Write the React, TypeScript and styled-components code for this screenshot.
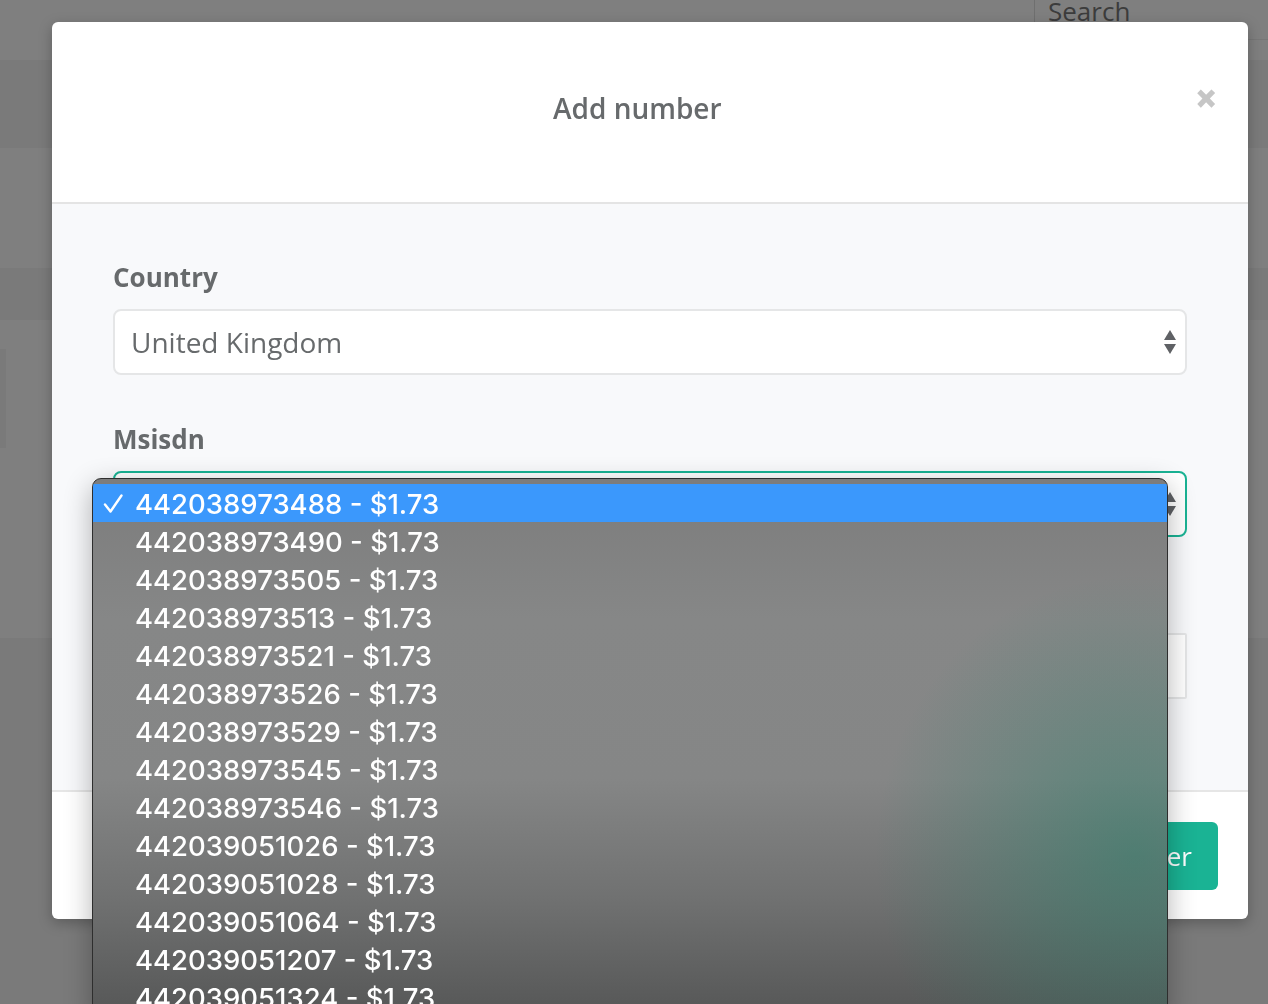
import React from "react";
import styled, { createGlobalStyle } from "styled-components";

const Global = createGlobalStyle`
  html, body { margin: 0; padding: 0; overflow: hidden; }
  body { font-family: "Open Sans", "Liberation Sans", sans-serif; background: #7a7a7a; }
  * { box-sizing: border-box; }
`;

const Page = styled.div`
  height: 1004px;
  display: flex;
  flex-direction: column;
`;

const TopBar = styled.div`
  height: 60px;
  background: #7f7f7f;
  display: flex;
  justify-content: flex-end;
`;

const SearchBox = styled.div`
  width: 234px;
  height: 40px;
  border-left: 1px solid #6f6f6f;
  border-bottom: 1px solid #777;
  padding: 0 0 0 13px;
  font-size: 26px;
  line-height: 22px;
  color: #3c3c3c;
  overflow: hidden;
`;

const Band = styled.div<{ $dark?: boolean; $h?: number }>`
  background: ${(p) => (p.$dark ? "#7a7a7a" : "#7f7f7f")};
  height: ${(p) => (p.$h ? `${p.$h}px` : "auto")};
  flex: ${(p) => (p.$h ? "none" : "1")};
  display: flex;
  flex-direction: column;
`;

const SideTab = styled.div`
  width: 6px;
  height: 99px;
  margin-top: 29px;
  background: #7a7a7a;
`;

const Modal = styled.div`
  position: fixed;
  top: 22px;
  left: 52px;
  width: 1196px;
  background: #fff;
  border-radius: 6px;
  box-shadow: 0 4px 14px rgba(0, 0, 0, 0.25);
  display: flex;
  flex-direction: column;
`;

const Header = styled.div`
  height: 182px;
  border-bottom: 2px solid #e4e4e4;
  display: flex;
  align-items: center;
  padding: 0 30px 8px 34px;
`;

const Title = styled.h4`
  margin: 0;
  flex: 1;
  text-align: center;
  font-size: 28px;
  font-weight: 600;
  color: #676a6c;
`;

const Close = styled.button`
  align-self: flex-start;
  margin: 56px 0 0 6px;
  border: 0;
  background: none;
  padding: 0;
  font-family: "Open Sans", sans-serif;
  font-size: 40px;
  line-height: 40px;
  font-weight: 800;
  color: #c6c6c6;
`;

const Body = styled.div`
  height: 588px;
  background: #f8f9fb;
  border-bottom: 2px solid #e6e6e6;
  padding: 58px 61px 0 61px;
  display: flex;
  flex-direction: column;
`;

const FieldGroup = styled.div`
  position: relative;
  display: flex;
  flex-direction: column;
  margin-bottom: 49px;
`;

const Label = styled.label`
  font-size: 26px;
  line-height: 30px;
  font-weight: 700;
  color: #676a6c;
  margin-bottom: 17px;
`;

const SelectBox = styled.div<{ $focus?: boolean }>`
  height: 66px;
  border: 2px solid ${(p) => (p.$focus ? "#1ab394" : "#e5e6e7")};
  border-radius: 8px;
  background: #fff;
  display: flex;
  align-items: center;
  justify-content: space-between;
  padding: 0 8px 0 16px;
  font-size: 28px;
  color: #676a6c;
`;

const InputBox = styled.div`
  height: 66px;
  border: 2px solid #e5e6e7;
  border-radius: 2px;
  background: #fff;
`;

const Arrows = styled.svg`
  width: 14px;
  height: 26px;
  flex: none;
`;

const Footer = styled.div`
  height: 127px;
  display: flex;
  justify-content: flex-end;
  align-items: flex-start;
  padding: 30px 30px 0 0;
`;

const PrimaryButton = styled.button`
  height: 68px;
  padding: 0 26px;
  border: 0;
  border-radius: 6px;
  background: #1ab394;
  color: #fff;
  font-family: "Open Sans", sans-serif;
  font-size: 26px;
`;

const Dropdown = styled.ul`
  position: absolute;
  top: 54px;
  left: -21px;
  width: 1076px;
  margin: 0;
  padding: 5px 0 0 0;
  list-style: none;
  border: 1px solid #2e2e2e;
  border-radius: 9px 9px 0 0;
  box-shadow: 0 8px 28px rgba(0, 0, 0, 0.3);
  background:
    radial-gradient(ellipse 260px 280px at 97% 70%, rgba(30, 130, 105, 0.45), rgba(30, 130, 105, 0) 100%),
    linear-gradient(to bottom, #7c7c7c 0px, #868787 140px, #858686 300px, #707171 420px, #575858 530px);
  overflow: hidden;
  z-index: 5;
`;

const Option = styled.li<{ $selected?: boolean }>`
  height: 38px;
  display: flex;
  align-items: center;
  padding: 2px 0 0 10px;
  background: ${(p) => (p.$selected ? "#3b98fc" : "transparent")};
  color: #fff;
  font-family: Inter, "Liberation Sans", sans-serif;
  font-size: 27.5px;
  font-weight: 500;
`;

const CheckSlot = styled.span`
  width: 32px;
  display: flex;
  align-items: center;
  flex: none;
`;

const Check = () => (
  <svg width="20" height="20" viewBox="0 0 20 20">
    <path d="M2 10.5 L7.5 17.5 L18.5 1.5" fill="none" stroke="#fff" strokeWidth="2.4" strokeLinecap="round" strokeLinejoin="round" />
  </svg>
);

const UpDown = () => (
  <Arrows viewBox="0 0 14 26">
    <path d="M7 1 L13 11 L1 11 Z" fill="#5f6165" />
    <path d="M1 15 L13 15 L7 25 Z" fill="#5f6165" />
  </Arrows>
);

const numbers = [
  "442038973488",
  "442038973490",
  "442038973505",
  "442038973513",
  "442038973521",
  "442038973526",
  "442038973529",
  "442038973545",
  "442038973546",
  "442039051026",
  "442039051028",
  "442039051064",
  "442039051207",
  "442039051324",
];

export default function App() {
  return (
    <>
      <Global />
      <Page>
        <TopBar>
          <SearchBox>Search</SearchBox>
        </TopBar>
        <Band $dark $h={88} />
        <Band $h={120} />
        <Band $dark $h={52} />
        <Band $h={318}>
          <SideTab />
        </Band>
        <Band $dark />
      </Page>
      <Modal>
        <Header>
          <Title>Add number</Title>
          <Close aria-label="Close">×</Close>
        </Header>
        <Body>
          <FieldGroup>
            <Label>Country</Label>
            <SelectBox>
              <span>United Kingdom</span>
              <UpDown />
            </SelectBox>
          </FieldGroup>
          <FieldGroup>
            <Label>Msisdn</Label>
            <SelectBox $focus>
              <span>442038973488 - $1.73</span>
              <UpDown />
            </SelectBox>
            <Dropdown>
              {numbers.map((n, i) => (
                <Option key={n} $selected={i === 0}>
                  <CheckSlot>{i === 0 ? <Check /> : null}</CheckSlot>
                  {n} - $1.73
                </Option>
              ))}
            </Dropdown>
          </FieldGroup>
          <FieldGroup>
            <Label>Name</Label>
            <InputBox />
          </FieldGroup>
        </Body>
        <Footer>
          <PrimaryButton>Add number</PrimaryButton>
        </Footer>
      </Modal>
    </>
  );
}
